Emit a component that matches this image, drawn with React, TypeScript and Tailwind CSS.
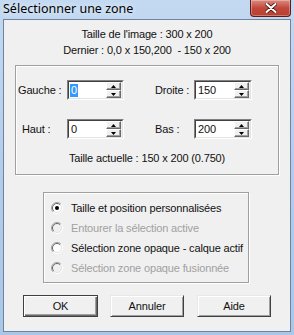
import React from "react";

function Radio({ checked, disabled }: { checked?: boolean; disabled?: boolean }) {
  return (
    <svg width="12" height="12" viewBox="0 0 12 12" className="shrink-0">
      <circle cx="6" cy="6" r="5" fill={disabled ? "#f0f0f0" : "#ffffff"} />
      <path d="M2.1 9.9 A5.5 5.5 0 0 1 9.9 2.1" fill="none" stroke="#a0a0a0" strokeWidth="1" />
      <path d="M9.9 2.1 A5.5 5.5 0 0 1 2.1 9.9" fill="none" stroke="#ffffff" strokeWidth="1" />
      <path d="M2.8 9.2 A4.5 4.5 0 0 1 9.2 2.8" fill="none" stroke="#696969" strokeWidth="1" />
      <path d="M9.2 2.8 A4.5 4.5 0 0 1 2.8 9.2" fill="none" stroke="#e3e3e3" strokeWidth="1" />
      {checked && <circle cx="6" cy="6" r="2" fill="#000" />}
    </svg>
  );
}

function SpinBtn({ up }: { up?: boolean }) {
  return (
    <div className="flex h-[9px] w-[15px] items-center justify-center border border-t-white border-l-white border-b-[#696969] border-r-[#696969] bg-[#f0f0f0] shadow-[inset_-1px_-1px_0_#a0a0a0]">
      <svg width="5" height="3" viewBox="0 0 5 3">
        {up ? <path d="M0 3 L5 3 L2.5 0 Z" fill="#000" /> : <path d="M0 0 L5 0 L2.5 3 Z" fill="#000" />}
      </svg>
    </div>
  );
}

function Spin({ value, selected, w }: { value: string; selected?: boolean; w: string }) {
  return (
    <div className={`flex h-[20px] ${w} border border-t-[#808080] border-l-[#808080] border-b-white border-r-white`}>
      <div className="flex flex-1 items-stretch border border-t-[#404040] border-l-[#404040] border-b-[#e3e3e3] border-r-[#e3e3e3] bg-white">
        <div className="flex flex-1 items-center pl-[1px]">
          {selected ? (
            <span className="bg-[#3399ff] px-[1px] leading-[13px] text-white">{value}</span>
          ) : (
            <span className="px-[1px] leading-[13px]">{value}</span>
          )}
        </div>
        <div className="flex w-[16px] flex-col justify-center bg-[#f0f0f0]">
          <SpinBtn up />
          <SpinBtn />
        </div>
      </div>
    </div>
  );
}

function Btn({ label, def }: { label: string; def?: boolean }) {
  return (
    <div
      className={
        def
          ? "flex h-[22px] w-[75px] items-center justify-center border border-[#404040] bg-[#f0f0f0] shadow-[inset_1px_1px_0_#fff,inset_-1px_-1px_0_#696969,inset_-2px_-2px_0_#a0a0a0]"
          : "flex h-[22px] w-[74px] items-center justify-center border border-t-[#e8e8e8] border-l-[#e8e8e8] border-b-[#404040] border-r-[#404040] bg-[#f0f0f0] shadow-[inset_1px_1px_0_#fff,inset_-1px_-1px_0_#a0a0a0]"
      }
    >
      {label}
    </div>
  );
}

export default function App() {
  return (
    <div className="flex h-[335px] w-[294px] flex-col bg-gradient-to-b from-[#c3d9f1] via-[#b2cdeb] to-[#a9c7e8] px-[3px] pb-[3px] font-['Liberation_Sans',Arial,sans-serif] text-[11px] tracking-[-0.15px] text-[#111]">
      <div className="flex h-[19px] items-start justify-between">
        <div className="pl-[0px] pt-[1px] font-['Noto_Sans',sans-serif] text-[12.5px] leading-[16px] tracking-normal text-black [text-shadow:0_0_6px_#ffffff]">
          Sélectionner une zone
        </div>
        <div className="flex h-[17px] w-[41px] items-center justify-center rounded-b-[4px] border border-t-0 border-[#5a1c1c] bg-gradient-to-b from-[#d98a80] via-[#c2473b] to-[#b9402f] shadow-[inset_0_0_0_1px_rgba(255,255,255,0.3)]">
          <svg width="12" height="10" viewBox="0 0 12 10">
            <path d="M1.5 1 L10.5 9 M10.5 1 L1.5 9" stroke="#4a1010" strokeWidth="3.6" strokeLinecap="round" />
            <path d="M1.5 1 L10.5 9 M10.5 1 L1.5 9" stroke="#ffffff" strokeWidth="2" strokeLinecap="round" />
          </svg>
        </div>
      </div>
      <div className="flex flex-1 flex-col border border-[#6d83a0] bg-[#f0f0f0]">
        <div className="mt-[8px] text-center leading-[13px]">Taille de l'image : 300 x 200</div>
        <div className="mt-[3px] text-center leading-[13px]">Dernier : 0,0 x 150,200&nbsp; - 150 x 200</div>

        <div className="ml-[11px] mt-[8px] flex h-[110px] w-[264px] flex-col border border-[#a0a0a0] shadow-[inset_1px_1px_0_#fff,1px_1px_0_#fff]">
          <div className="mt-[14px] flex items-center">
            <div className="w-[51px] pl-[2px]">Gauche :</div>
            <Spin value="0" selected w="w-[57px]" />
            <div className="ml-[31px] w-[39px]">Droite :</div>
            <Spin value="150" w="w-[58px]" />
          </div>
          <div className="mt-[19px] flex items-center">
            <div className="w-[51px] pl-[6px]">Haut :</div>
            <Spin value="0" w="w-[57px]" />
            <div className="ml-[31px] w-[39px]">Bas :</div>
            <Spin value="200" w="w-[58px]" />
          </div>
          <div className="mt-[13px] text-center leading-[13px]">Taille actuelle : 150 x 200 (0.750)</div>
        </div>

        <div className="ml-[39px] mt-[17px] flex h-[91px] w-[206px] flex-col border border-[#a0a0a0] pl-[7px] pt-[5px] shadow-[inset_1px_1px_0_#fff,1px_1px_0_#fff]">
          <div className="flex h-[20px] items-center gap-[8px]">
            <Radio checked />
            <span>Taille et position personnalisées</span>
          </div>
          <div className="flex h-[20px] items-center gap-[8px]">
            <Radio disabled />
            <span className="text-[#a0a0a0]">Entourer la sélection active</span>
          </div>
          <div className="flex h-[20px] items-center gap-[8px]">
            <Radio />
            <span>Sélection zone opaque - calque actif</span>
          </div>
          <div className="flex h-[20px] items-center gap-[8px]">
            <Radio disabled />
            <span className="text-[#a0a0a0]">Sélection zone opaque fusionnée</span>
          </div>
        </div>

        <div className="ml-[19px] mt-[12px] flex gap-[12px]">
          <Btn label="OK" def />
          <Btn label="Annuler" />
          <div className="ml-[1px]">
            <Btn label="Aide" />
          </div>
        </div>
      </div>
    </div>
  );
}
